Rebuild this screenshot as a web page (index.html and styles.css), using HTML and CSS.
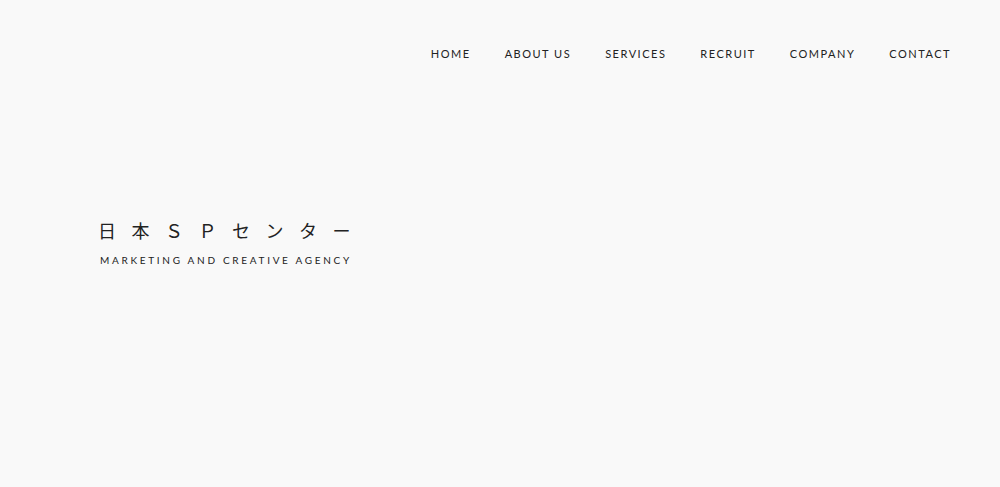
FILE: index.html
```html
<!DOCTYPE html>
<html lang="ja">
<head>
    <meta charset="UTF-8">
    <title>日本SPセンター</title>
    <link rel="stylesheet" href="styles.css">
</head>
<body>

<header class="header">
    <nav class="nav">
        <a href="#">HOME</a>
        <a href="#">ABOUT US</a>
        <a href="#">SERVICES</a>
        <a href="#">RECRUIT</a>
        <a href="#">COMPANY</a>
        <a href="#">CONTACT</a>
    </nav>
</header>

<main class="hero">
    <h1 class="logo">日本ＳＰセンター</h1>
    <p class="tagline">MARKETING AND CREATIVE AGENCY</p>
</main>

</body>
</html>
```

FILE: styles.css
```css
body {
    margin: 0;
    background-color: #f9f9f9;
    color: #222;
    font-family: Lato, "Noto Sans CJK JP", sans-serif;
    height: 487px;
    overflow: hidden;
}
.header {
    display: flex;
    justify-content: flex-end;
    padding: 47px 49px 0 0;
}
.nav {
    display: flex;
    gap: 34px;
}
.nav a {
    color: #222;
    text-decoration: none;
    font-size: 11px;
    letter-spacing: 1.5px;
    line-height: 14px;
}
.hero {
    padding: 157px 0 0 98px;
}
.logo {
    margin: 0;
    font-family: "Noto Sans CJK JP", sans-serif;
    font-weight: 400;
    font-size: 18px;
    line-height: 24px;
    letter-spacing: 15.5px;
}
.tagline {
    margin: 12px 0 0 2px;
    font-size: 10px;
    letter-spacing: 2.7px;
    line-height: 12px;
}
```
